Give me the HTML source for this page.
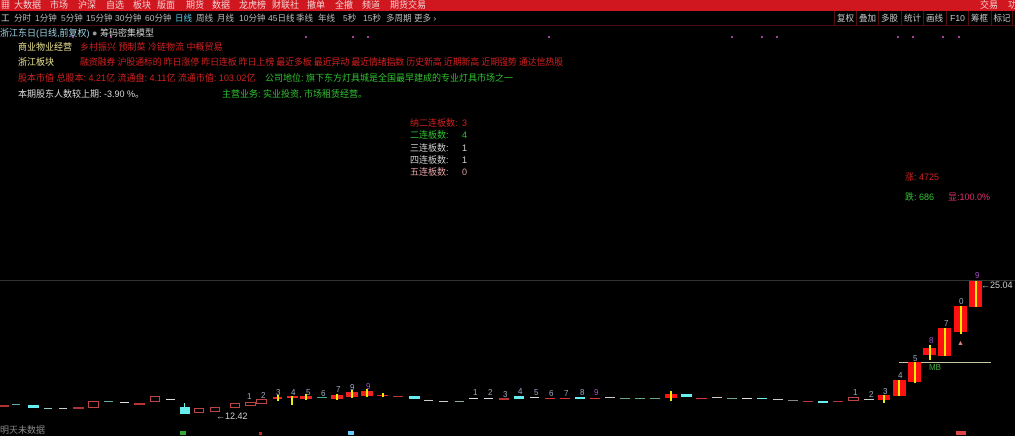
<!DOCTYPE html>
<html><head><meta charset="utf-8">
<style>
*{margin:0;padding:0;box-sizing:border-box}
body{width:1015px;height:435px;background:#000;overflow:hidden;position:relative;font-family:"Liberation Sans","Noto Sans CJK SC",sans-serif;font-size:9px;color:#ccc}
.a{position:absolute;white-space:nowrap}
.top{position:absolute;left:0;top:0;width:1015px;height:11px;background:#d0161e}
.top span{position:absolute;top:0;color:#f2d0d0;font-size:9px;line-height:10px;white-space:nowrap}
.tb span{position:absolute;top:13px;color:#b8b8b8;font-size:8.5px;line-height:10px;white-space:nowrap}
.btn{position:absolute;top:11px;height:14px;width:22px;border-left:1px solid #551010;color:#c8c8c8;font-size:8.5px;line-height:14px;text-align:center;white-space:nowrap;overflow:hidden}
.d{position:absolute;width:2px;height:2px;background:#a040a0}
.k{position:absolute}
.n{position:absolute;font-size:8px;color:#9aa8c0}
</style></head><body>
<div class="top">
<span style="left:1px;color:#fff">▦</span>
<span style="left:14px">大数据</span><span style="left:50px">市场</span><span style="left:78px">沪深</span><span style="left:106px">自选</span><span style="left:133px">板块</span><span style="left:157px">版面</span><span style="left:186px">期货</span><span style="left:212px">数据</span><span style="left:239px">龙虎榜</span><span style="left:272px">财联社</span><span style="left:307px">撤单</span><span style="left:335px">全撤</span><span style="left:362px">频道</span><span style="left:390px">期货交易</span>
<span style="left:980px">交易</span><span style="left:1008px">功</span>
</div>
<div class="tb">
<span style="left:1px;color:#ddd">工</span>
<span style="left:14px">分时</span><span style="left:35px">1分钟</span><span style="left:61px">5分钟</span><span style="left:86px">15分钟</span><span style="left:115px">30分钟</span><span style="left:145px">60分钟</span><span style="left:175px;color:#5cc8e8">日线</span><span style="left:196px">周线</span><span style="left:217px">月线</span><span style="left:239px">10分钟</span><span style="left:268px">45日线</span><span style="left:296px">季线</span><span style="left:318px">年线</span><span style="left:343px">5秒</span><span style="left:363px">15秒</span><span style="left:386px">多周期</span><span style="left:414px">更多 ›</span>
</div>
<div class="btn" style="left:834px">复权</div><div class="btn" style="left:856px">叠加</div><div class="btn" style="left:878px">多股</div><div class="btn" style="left:901px">统计</div><div class="btn" style="left:923px">画线</div><div class="btn" style="left:946px">F10</div><div class="btn" style="left:968px">筹框</div><div class="btn" style="left:991px;border-right:1px solid #551010">标记</div>
<div class="a" style="left:0;top:25px;width:1015px;height:1px;background:#4a0c0c"></div>

<div class="a" style="left:0;top:26px;color:#9ad0e0">浙江东日(日线,前复权) <span style="color:#999">●</span> <span style="color:#ccc">筹码密集模型</span></div>
<div class="a" style="left:18px;top:40px;color:#e8e090">商业物业经营</div>
<div class="a" style="left:80px;top:40px;color:#d02020">乡村振兴 预制菜 冷链物流 中概贸易</div>
<div class="a" style="left:18px;top:55px;color:#e8e090">浙江板块</div>
<div class="a" style="left:80px;top:55px;color:#d02020;letter-spacing:-0.2px">融资融券 沪股通标的 昨日涨停 昨日连板 昨日上榜 最近多板 最近异动 最近情绪指数 历史新高 近期新高 近期强势 通达信热股</div>
<div class="a" style="left:18px;top:71px;color:#d02020">股本市值 总股本: 4.21亿 流通盘: 4.11亿 流通市值: 103.02亿</div>
<div class="a" style="left:265px;top:71px;color:#30c030">公司地位: 旗下东方灯具城是全国最早建成的专业灯具市场之一</div>
<div class="a" style="left:18px;top:87px;color:#d8d8d8">本期股东人数较上期: -3.90 %。</div>
<div class="a" style="left:222px;top:87px;color:#30c030">主营业务: 实业投资, 市场租赁经营。</div>

<div class="d" style="left:72px;top:36px"></div><div class="d" style="left:110px;top:36px"></div><div class="d" style="left:305px;top:36px"></div><div class="d" style="left:352px;top:36px"></div><div class="d" style="left:367px;top:36px"></div><div class="d" style="left:548px;top:36px"></div><div class="d" style="left:731px;top:36px"></div><div class="d" style="left:761px;top:36px"></div><div class="d" style="left:776px;top:36px"></div><div class="d" style="left:897px;top:36px"></div><div class="d" style="left:912px;top:36px"></div><div class="d" style="left:942px;top:36px"></div><div class="d" style="left:958px;top:36px"></div>

<div class="a" style="left:410px;top:117px;color:#d02020;line-height:12.3px">纳二连板数:<br><span style="color:#30c030">二连板数:</span><br><span style="color:#ccc">三连板数:</span><br><span style="color:#ccc">四连板数:</span><br><span style="color:#e0a0a0">五连板数:</span></div>
<div class="a" style="left:462px;top:117px;color:#d02020;line-height:12.3px">3<br><span style="color:#30c030">4</span><br><span style="color:#ccc">1</span><br><span style="color:#ccc">1</span><br><span style="color:#e0a0a0">0</span></div>

<div class="a" style="left:905px;top:170px;color:#d02020">涨: 4725</div>
<div class="a" style="left:905px;top:190px;color:#30c030">跌: 686</div>
<div class="a" style="left:948px;top:190px;color:#e03070">显:100.0%</div>

<div class="a" style="left:0;top:280px;width:1015px;height:1px;background:#333"></div>
<div class="a" style="left:899px;top:362px;width:92px;height:1px;background:#c8c8a0"></div>

<div class="k" style="left:0;top:405px;width:9px;height:2px;background:#b03030"></div>
<div class="k" style="left:12px;top:404px;width:8px;height:1px;background:#6aa"></div>
<div class="k" style="left:28px;top:405px;width:11px;height:3px;background:#6ee"></div>
<div class="k" style="left:44px;top:408px;width:8px;height:1px;background:#8cc"></div>
<div class="k" style="left:59px;top:408px;width:8px;height:1px;background:#ccc"></div>
<div class="k" style="left:73px;top:407px;width:11px;height:2px;background:#a33"></div>
<div class="k" style="left:88px;top:401px;width:11px;height:7px;border:1px solid #b44"></div>
<div class="k" style="left:104px;top:401px;width:9px;height:1px;background:#6aa"></div>
<div class="k" style="left:120px;top:402px;width:9px;height:1px;background:#ddd"></div>
<div class="k" style="left:134px;top:403px;width:11px;height:2px;background:#b33"></div>
<div class="k" style="left:150px;top:396px;width:10px;height:6px;border:1px solid #b44"></div>
<div class="k" style="left:166px;top:399px;width:9px;height:1px;background:#ddd"></div>
<div class="k" style="left:180px;top:407px;width:10px;height:7px;background:#6ee"></div>
<div class="k" style="left:184px;top:403px;width:1px;height:4px;background:#6ee"></div>
<div class="k" style="left:194px;top:408px;width:10px;height:5px;border:1px solid #b44"></div>
<div class="k" style="left:210px;top:407px;width:10px;height:5px;border:1px solid #b44"></div>
<div class="a" style="left:216px;top:411px;color:#ccc;font-size:9px">←12.42</div>
<div class="k" style="left:230px;top:403px;width:10px;height:5px;border:1px solid #b44"></div>
<div class="k" style="left:245px;top:402px;width:11px;height:4px;border:1px solid #b44"></div><div class="n" style="left:247px;top:392px">1</div>
<div class="k" style="left:256px;top:399px;width:11px;height:5px;border:1px solid #b44"></div><div class="n" style="left:261px;top:391px">2</div>
<div class="k" style="left:273px;top:397px;width:9px;height:2px;background:#e22"></div><div class="k" style="left:277px;top:395px;width:2px;height:6px;background:#ee0"></div><div class="n" style="left:276px;top:388px">3</div>
<div class="k" style="left:287px;top:396px;width:11px;height:2px;background:#e22"></div><div class="k" style="left:291px;top:396px;width:2px;height:9px;background:#ee0"></div><div class="n" style="left:291px;top:388px">4</div>
<div class="k" style="left:300px;top:396px;width:12px;height:3px;background:#e22"></div><div class="k" style="left:305px;top:394px;width:2px;height:6px;background:#ee0"></div><div class="n" style="left:306px;top:388px">5</div>
<div class="k" style="left:317px;top:397px;width:10px;height:1px;background:#4a8"></div><div class="n" style="left:321px;top:389px">6</div>
<div class="k" style="left:331px;top:395px;width:12px;height:4px;background:#e22"></div><div class="k" style="left:336px;top:394px;width:2px;height:6px;background:#ee0"></div><div class="n" style="left:336px;top:385px">7</div>
<div class="k" style="left:346px;top:392px;width:12px;height:5px;background:#e22"></div><div class="k" style="left:351px;top:390px;width:2px;height:8px;background:#ee0"></div><div class="n" style="left:350px;top:383px">9</div>
<div class="k" style="left:361px;top:391px;width:12px;height:5px;background:#e22"></div><div class="k" style="left:366px;top:389px;width:2px;height:8px;background:#ee0"></div><div class="n" style="left:366px;top:382px;color:#a050c0">9</div>
<div class="k" style="left:377px;top:395px;width:11px;height:1px;background:#e22"></div><div class="k" style="left:382px;top:393px;width:2px;height:4px;background:#ee0"></div>
<div class="k" style="left:393px;top:396px;width:10px;height:1px;background:#b33"></div>
<div class="k" style="left:409px;top:396px;width:11px;height:3px;background:#6ee"></div>
<div class="k" style="left:424px;top:400px;width:9px;height:1px;background:#ccc"></div>
<div class="k" style="left:439px;top:401px;width:9px;height:1px;background:#ccc"></div>
<div class="k" style="left:455px;top:401px;width:9px;height:1px;background:#8aa"></div>
<div class="k" style="left:469px;top:398px;width:9px;height:1px;background:#ddd"></div><div class="n" style="left:473px;top:388px">1</div>
<div class="k" style="left:484px;top:398px;width:9px;height:1px;background:#ddd"></div><div class="n" style="left:488px;top:388px">2</div>
<div class="k" style="left:499px;top:398px;width:10px;height:2px;background:#b33"></div><div class="n" style="left:503px;top:390px">3</div>
<div class="k" style="left:514px;top:396px;width:10px;height:3px;background:#6ee"></div><div class="n" style="left:518px;top:387px">4</div>
<div class="k" style="left:530px;top:397px;width:9px;height:1px;background:#ddd"></div><div class="n" style="left:534px;top:388px">5</div>
<div class="k" style="left:545px;top:398px;width:10px;height:1px;background:#d33"></div><div class="n" style="left:549px;top:389px">6</div>
<div class="k" style="left:560px;top:398px;width:10px;height:1px;background:#d33"></div><div class="n" style="left:564px;top:389px">7</div>
<div class="k" style="left:575px;top:397px;width:10px;height:2px;background:#6ee"></div><div class="n" style="left:580px;top:388px">8</div>
<div class="k" style="left:590px;top:398px;width:10px;height:1px;background:#d33"></div><div class="n" style="left:594px;top:388px;color:#a050c0">9</div>
<div class="k" style="left:605px;top:397px;width:10px;height:1px;background:#ccc"></div>
<div class="k" style="left:620px;top:398px;width:10px;height:1px;background:#6a8"></div>
<div class="k" style="left:635px;top:398px;width:10px;height:1px;background:#6a8"></div>
<div class="k" style="left:650px;top:398px;width:10px;height:1px;background:#6a8"></div>
<div class="k" style="left:665px;top:394px;width:12px;height:4px;background:#f11"></div><div class="k" style="left:670px;top:391px;width:2px;height:10px;background:#ee0"></div>
<div class="k" style="left:681px;top:394px;width:11px;height:3px;background:#6ee"></div>
<div class="k" style="left:696px;top:398px;width:11px;height:1px;background:#d33"></div>
<div class="k" style="left:712px;top:397px;width:10px;height:1px;background:#ccc"></div>
<div class="k" style="left:727px;top:398px;width:10px;height:1px;background:#6a8"></div>
<div class="k" style="left:742px;top:398px;width:10px;height:1px;background:#ddd"></div>
<div class="k" style="left:757px;top:398px;width:10px;height:1px;background:#6ee"></div>
<div class="k" style="left:773px;top:399px;width:10px;height:1px;background:#ccc"></div>
<div class="k" style="left:788px;top:400px;width:10px;height:1px;background:#888"></div>
<div class="k" style="left:803px;top:401px;width:10px;height:1px;background:#b33"></div>
<div class="k" style="left:818px;top:401px;width:10px;height:2px;background:#6ee"></div>
<div class="k" style="left:833px;top:401px;width:10px;height:1px;background:#b33"></div>
<div class="k" style="left:848px;top:397px;width:11px;height:4px;border:1px solid #b44"></div><div class="n" style="left:853px;top:388px">1</div>
<div class="k" style="left:864px;top:399px;width:10px;height:1px;background:#ccc"></div><div class="n" style="left:869px;top:390px">2</div>
<div class="k" style="left:878px;top:395px;width:12px;height:5px;background:#f11"></div><div class="k" style="left:883px;top:395px;width:2px;height:8px;background:#ee0"></div><div class="n" style="left:883px;top:387px">3</div>
<div class="k" style="left:893px;top:380px;width:13px;height:16px;background:#f11"></div><div class="k" style="left:898px;top:380px;width:2px;height:16px;background:#ee0"></div><div class="n" style="left:898px;top:371px">4</div>
<div class="k" style="left:908px;top:362px;width:13px;height:20px;background:#f11"></div><div class="k" style="left:914px;top:362px;width:2px;height:21px;background:#ee0"></div><div class="n" style="left:913px;top:354px">5</div>
<div class="k" style="left:923px;top:348px;width:13px;height:7px;background:#f11"></div><div class="k" style="left:929px;top:345px;width:2px;height:15px;background:#ee0"></div><div class="n" style="left:929px;top:336px;color:#a050c0">8</div>
<div class="a" style="left:929px;top:363px;color:#40b040;font-size:8px">MB</div>
<div class="k" style="left:938px;top:328px;width:13px;height:28px;background:#f11"></div><div class="k" style="left:944px;top:328px;width:2px;height:28px;background:#ee0"></div><div class="n" style="left:944px;top:319px">7</div>
<div class="k" style="left:954px;top:306px;width:13px;height:26px;background:#f11"></div><div class="k" style="left:960px;top:306px;width:2px;height:28px;background:#ee0"></div><div class="n" style="left:959px;top:297px">0</div>
<div class="a" style="left:957px;top:340px;color:#e08080;font-size:7px">▲</div>
<div class="k" style="left:969px;top:281px;width:13px;height:26px;background:#f11"></div><div class="k" style="left:975px;top:281px;width:2px;height:26px;background:#ee0"></div><div class="n" style="left:975px;top:271px;color:#a050c0">9</div>
<div class="a" style="left:981px;top:280px;color:#ccc;font-size:9px">←25.04</div>

<div class="a" style="left:0;top:423px;color:#888">明天未数据</div>
<div class="k" style="left:180px;top:431px;width:6px;height:4px;background:#3a3"></div>
<div class="k" style="left:259px;top:432px;width:3px;height:3px;background:#c22"></div>
<div class="k" style="left:348px;top:431px;width:6px;height:4px;background:#6cf"></div>
<div class="k" style="left:956px;top:431px;width:10px;height:4px;background:#d44"></div>
</body></html>
